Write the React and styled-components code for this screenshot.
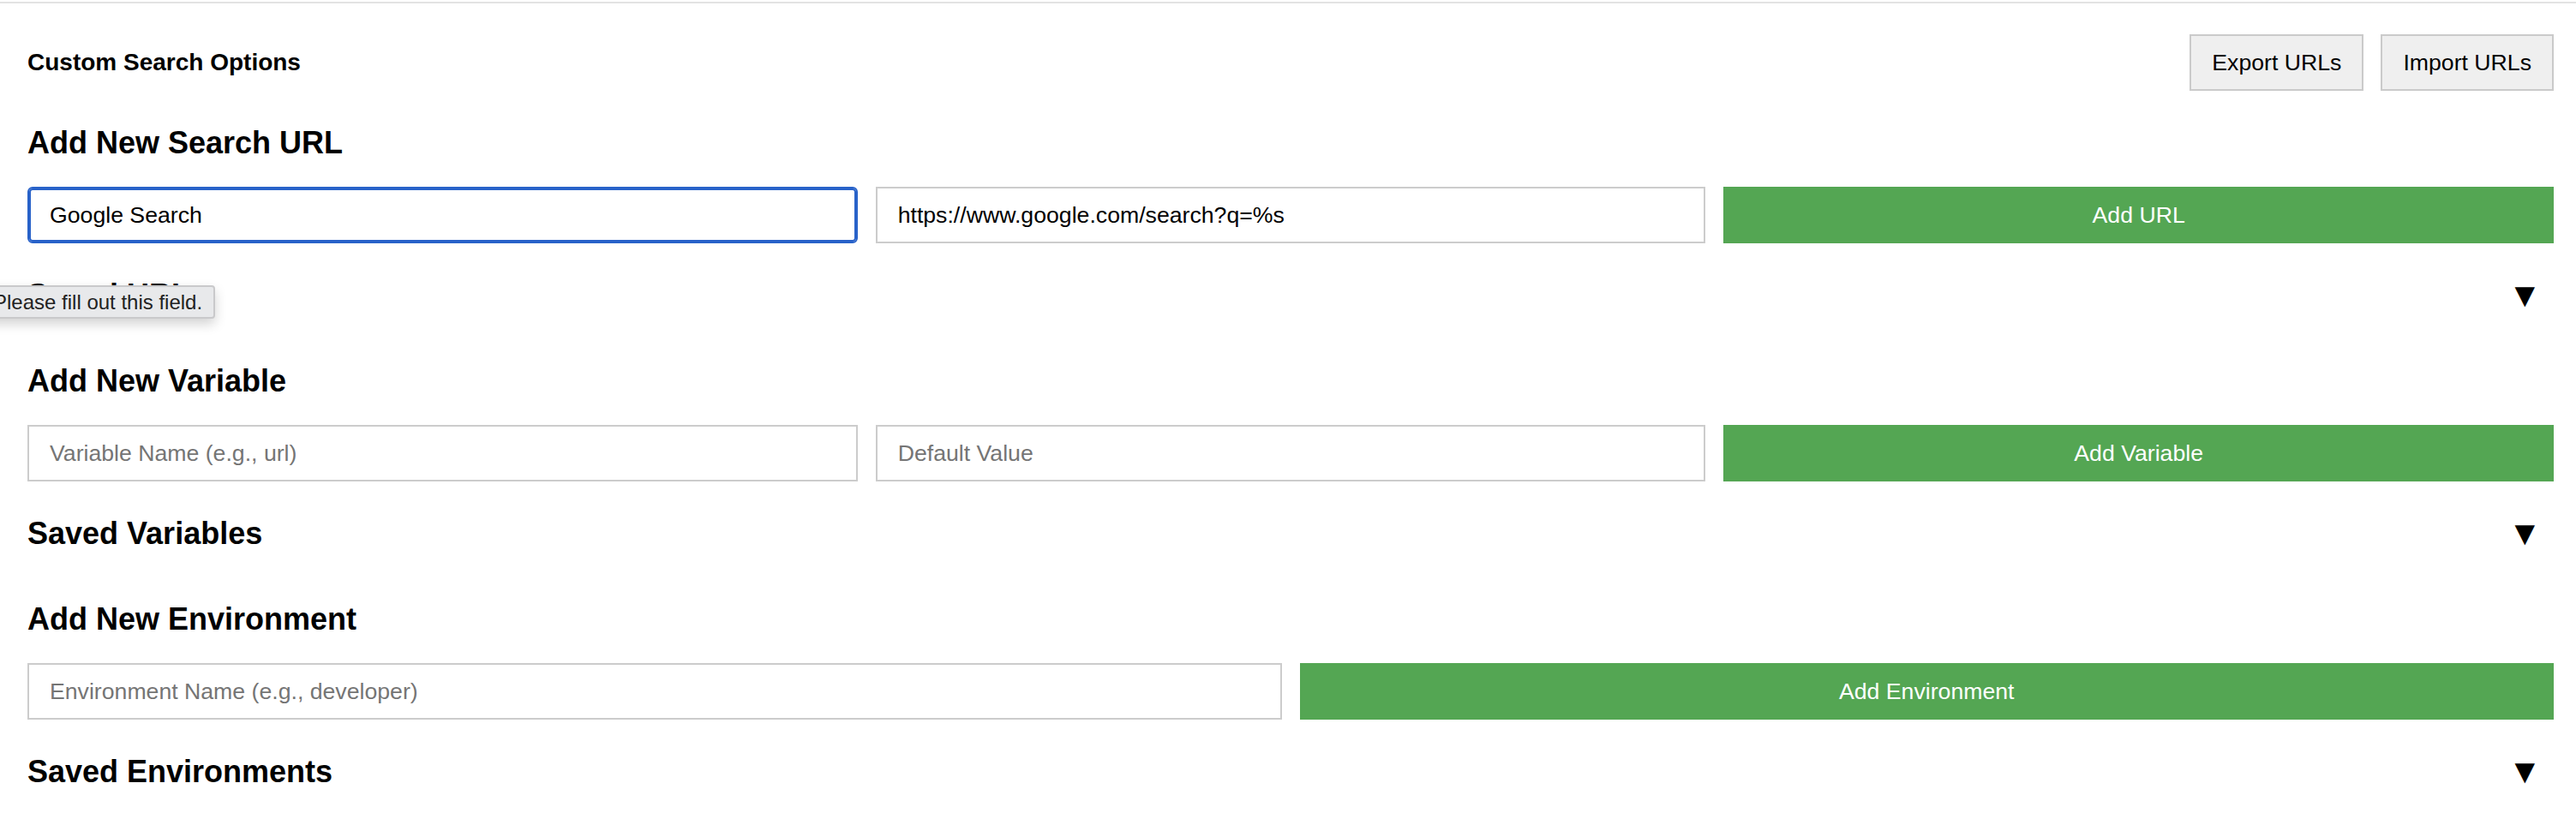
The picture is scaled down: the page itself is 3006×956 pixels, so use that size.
import React from 'react'
import styled, { createGlobalStyle } from 'styled-components'

const GlobalStyle = createGlobalStyle`
  html, body {
    margin: 0;
    padding: 0;
    background: #fff;
    overflow: hidden;
  }
  body {
    font-family: "Liberation Sans", Arial, Helvetica, sans-serif;
    color: #000;
  }
`

const Page = styled.div`
  padding: 0 26px 0 32px;
`

const TopRule = styled.div`
  height: 2px;
  margin: 2px -26px 0 -32px;
  background: #e3e3e3;
`

const Header = styled.div`
  display: flex;
  justify-content: space-between;
  align-items: center;
  margin-top: 36px;
`

const Title = styled.h2`
  margin: 0;
  font-size: 28px;
  font-weight: bold;
`

const HeaderActions = styled.div`
  display: flex;
  gap: 20px;
`

const GrayButton = styled.button`
  height: 66px;
  padding: 0 24px;
  border: 2px solid #cacaca;
  border-radius: 0;
  background: #efefef;
  color: #000;
  font-family: "Liberation Sans", Arial, sans-serif;
  font-size: 26.67px;
`

const SectionTitle = styled.h3`
  margin: ${props => props.$top}px 0 0;
  font-size: 36px;
  line-height: 42px;
  font-weight: bold;
`

const FormRow = styled.div`
  display: grid;
  grid-template-columns: repeat(${props => props.$cols}, minmax(0, 1fr));
  gap: 21px;
  margin-top: 30px;
`

const TextInput = styled.input`
  min-width: 0;
  height: 66px;
  box-sizing: border-box;
  padding: 0 24px;
  border: 2px solid ${props => props.$focused ? '#2862c9' : '#cccccc'};
  border-radius: ${props => props.$focused ? '6px' : '0'};
  box-shadow: ${props => props.$focused ? 'inset 0 0 0 2px #2862c9' : 'none'};
  outline: none;
  background: #fff;
  color: #000;
  font-family: "Liberation Sans", Arial, sans-serif;
  font-size: 26.67px;

  &::placeholder {
    color: #757575;
  }
`

const AddButton = styled.button`
  min-width: 0;
  height: 66px;
  border: none;
  border-radius: 0;
  background: #54a653;
  color: #fff;
  font-family: "Liberation Sans", Arial, sans-serif;
  font-size: 26.67px;
`

const SavedHeader = styled.div`
  position: relative;
  display: flex;
  justify-content: space-between;
  align-items: center;
  margin-top: 40px;
  padding-right: 14px;
`

const Toggle = styled.span`
  font-size: 40px;
  line-height: 1;
  margin-top: -2px;
`

// native "required" validation bubble, sits over the Saved URLs heading
const Bubble = styled.div`
  position: absolute;
  left: -55px;
  top: 9px;
  height: 39px;
  box-sizing: border-box;
  display: flex;
  align-items: center;
  padding: 0 13px;
  border: 2px solid #c9c9cb;
  border-radius: 4px;
  background: #e8e9eb;
  color: #222;
  font-size: 24px;
  white-space: nowrap;
  box-shadow: 0 6px 14px rgba(0, 0, 0, 0.18);
`

export default function App() {
  return (
    <Page>
      <GlobalStyle />
      <TopRule />
      <Header>
        <Title>Custom Search Options</Title>
        <HeaderActions>
          <GrayButton>Export URLs</GrayButton>
          <GrayButton>Import URLs</GrayButton>
        </HeaderActions>
      </Header>

      <SectionTitle $top={40}>Add New Search URL</SectionTitle>
      <FormRow $cols={3}>
        <TextInput $focused defaultValue="Google Search" />
        <TextInput defaultValue="https://www.google.com/search?q=%s" />
        <AddButton>Add URL</AddButton>
      </FormRow>
      <SavedHeader>
        <SectionTitle $top={0}>Saved URLs</SectionTitle>
        <Toggle>▼</Toggle>
        <Bubble>Please fill out this field.</Bubble>
      </SavedHeader>

      <SectionTitle $top={58}>Add New Variable</SectionTitle>
      <FormRow $cols={3}>
        <TextInput placeholder="Variable Name (e.g., url)" />
        <TextInput placeholder="Default Value" />
        <AddButton>Add Variable</AddButton>
      </FormRow>
      <SavedHeader>
        <SectionTitle $top={0}>Saved Variables</SectionTitle>
        <Toggle>▼</Toggle>
      </SavedHeader>

      <SectionTitle $top={58}>Add New Environment</SectionTitle>
      <FormRow $cols={2}>
        <TextInput placeholder="Environment Name (e.g., developer)" />
        <AddButton>Add Environment</AddButton>
      </FormRow>
      <SavedHeader>
        <SectionTitle $top={0}>Saved Environments</SectionTitle>
        <Toggle>▼</Toggle>
      </SavedHeader>
    </Page>
  )
}
